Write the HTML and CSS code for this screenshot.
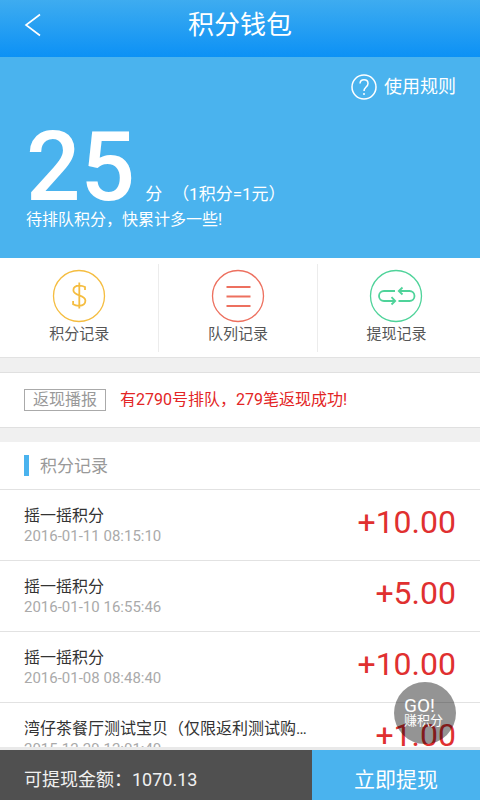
FILE: index.html
```html
<!DOCTYPE html>
<html lang="zh-CN">
<head>
<meta charset="utf-8">
<meta name="viewport" content="width=device-width, initial-scale=1">
<title>积分钱包</title>
<link rel="stylesheet" href="styles.css">
</head>
<body>
<header class="topbar">
  <a class="back" href="#" aria-label="返回">
    <svg width="18" height="24" viewBox="0 0 18 24"><path d="M16 1.500 2 12l14 10.500"/></svg>
  </a>
  <h1>积分钱包</h1>
</header>
<main>
  <section class="wallet">
    <a class="rules" href="#">
      <svg width="26" height="26" viewBox="0 0 26 26"><circle cx="13" cy="13" r="12"/><path d="M9 9.500C9.200 6.700 10.700 5.700 13 5.700c2.400 0 4 1.400 4 3.700 0 3.600-4 3.600-4 7.600M13 18.900v2.200"/></svg>
      使用规则
    </a>
    <p class="score"><strong>25</strong><span>分</span><span>（1积分=1元）</span></p>
    <p class="hint">待排队积分，快累计多一些!</p>
  </section>
  <nav class="tabs">
    <a class="gold" href="#">
      <svg width="54" height="54" viewBox="0 0 54 54"><circle cx="27" cy="27" r="25.500"/><path class="bold" d="M33 21v-3c-1.800-1-3.800-1.400-5.600-1.400-4 0-6 2-6 4.600 0 6 12 4.200 12 10.400 0 3.400-2.700 5.200-6.300 5.200-2.200 0-4.300-.5-6-1.600V32M27.300 13.500v26"/></svg>
      积分记录
    </a>
    <a class="coral" href="#">
      <svg width="54" height="54" viewBox="0 0 54 54"><circle cx="27" cy="27" r="25.500"/><path class="bold" d="M15.500 18h24M15.500 27.500h24M15.500 37h24"/></svg>
      队列记录
    </a>
    <a class="green" href="#">
      <svg width="54" height="54" viewBox="0 0 54 54"><circle cx="27" cy="27" r="25.500"/><path class="bold" d="M26 22H15a5 5 0 0 0 0 10h11M22.500 28.200l3.700 3.800-3.700 3.500M29.500 32h11a5 5 0 0 0 0-10h-11M33.500 18.500 29.800 22l3.700 3.500"/></svg>
      提现记录
    </a>
  </nav>
  <section class="news">
    <span class="tag">返现播报</span>
    <span>有2790号排队，279笔返现成功!</span>
  </section>
  <section class="records">
    <h2>积分记录</h2>
    <ul>
      <li><div class="info"><h3>摇一摇积分</h3><time>2016-01-11 08:15:10</time></div><span class="amount">+10.00</span></li>
      <li><div class="info"><h3>摇一摇积分</h3><time>2016-01-10 16:55:46</time></div><span class="amount">+5.00</span></li>
      <li><div class="info"><h3>摇一摇积分</h3><time>2016-01-08 08:48:40</time></div><span class="amount">+10.00</span></li>
      <li><div class="info"><h3>湾仔茶餐厅测试宝贝（仅限返利测试购物）</h3><time>2015-12-29 12:01:40</time></div><span class="amount">+1.00</span></li>
    </ul>
  </section>
</main>
<footer class="bottom">
  <button class="go" type="button"><b>GO!</b><span>赚积分</span></button>
  <p>可提现金额：<span>1070.13</span></p>
  <button class="withdraw" type="button">立即提现</button>
</footer>
</body>
</html>
```
FILE: styles.css
```css
* { box-sizing: border-box; }

body {
  margin: 0;
  height: 100vh;
  display: flex;
  flex-direction: column;
  overflow: hidden;
  background: #f0f0f0;
  color: #333;
  font-family: Roboto, "Noto Sans CJK SC", sans-serif;
  font-size: 16px;
  line-height: 20px;
}

h1, h2, h3, p, ul { margin: 0; padding: 0; font-weight: 400; }
ul { list-style: none; }
a { color: inherit; text-decoration: none; }
button { border: 0; padding: 0; color: #fff; font-family: inherit; }
svg { display: block; fill: none; stroke: currentColor; stroke-width: 1.3; }
.bold { stroke-width: 1.8; }

.topbar {
  flex: none;
  display: grid;
  grid-template-columns: 64px 1fr 64px;
  height: 57px;
  padding-bottom: 8px;
  align-items: center;
  background: linear-gradient(#3eacf0, #0c91f5);
  color: #fff;
}
.topbar h1 { font-size: 26px; line-height: 36px; text-align: center; }
.back { padding-left: 24px; }
.back svg { stroke-width: 1.6; }

main { flex: 1; min-height: 0; overflow: hidden; }

.wallet {
  height: 201px;
  padding: 17px 24px 0;
  background: #4ab3ee;
  color: #fff;
}
.rules {
  display: flex;
  justify-content: flex-end;
  align-items: center;
  gap: 7px;
  font-size: 18px;
  line-height: 26px;
}
.rules svg { stroke-width: 1.5; }
.score {
  display: flex;
  align-items: baseline;
  gap: 10px;
  height: 110px;
  padding: 11px 0 0 2px;
  font-size: 17px;
}
.score strong { font-size: 96px; font-weight: 500; line-height: 112px; }
.score span { line-height: 20px; }
.hint { padding-left: 2px; }

.tabs {
  display: flex;
  height: 100px;
  padding: 6px 0 5px;
  border-bottom: 1px solid #e2e2e2;
  background: #fff;
}
.tabs a {
  width: 33%;
  display: flex;
  flex-direction: column;
  align-items: center;
  gap: 1px;
  padding-top: 5px;
  color: #555;
  font-size: 15px;
}
.tabs a + a { border-left: 1px solid #ececec; }
.gold svg { color: #f5bd40; }
.coral svg { color: #ed705f; }
.green svg { color: #4fd39a; }

.news {
  display: flex;
  align-items: center;
  gap: 14px;
  height: 56px;
  margin: 14px 0;
  padding: 0 24px;
  border-top: 1px solid #e0e0e0;
  border-bottom: 1px solid #e0e0e0;
  background: #fff;
  color: #e32525;
}
.tag {
  padding: 0 8px;
  border: 1px solid #aaa;
  color: #999;
}

.records { background: #fff; }
.records h2 {
  display: flex;
  align-items: center;
  gap: 11px;
  height: 48px;
  padding: 0 24px;
  border-bottom: 1px solid #e2e2e2;
  color: #999;
  font-size: 17px;
}
.records h2::before { content: ""; width: 5px; height: 21px; background: #4ab3ee; }
.records li {
  display: flex;
  justify-content: space-between;
  height: 71px;
  padding: 16px 24px 0;
  border-bottom: 1px solid #e2e2e2;
}
.info { width: 284px; }
.info h3 {
  overflow: hidden;
  font-size: 16px;
  text-overflow: ellipsis;
  white-space: nowrap;
}
.info time { display: block; color: #aaa; font-size: 15px; }
.amount { color: #e03030; font-size: 32px; line-height: 32px; }

.bottom {
  position: relative;
  flex: none;
  display: flex;
  height: 53px;
  border-top: 3px solid #e9e9e9;
  background: #505050;
  color: #fff;
}
.bottom p { width: 65%; padding-left: 24px; font-size: 18px; line-height: 60px; color: #f0f0f0; }
.withdraw { width: 35%; background: #4ab3ee; font-size: 21px; line-height: 60px; }
.go {
  position: absolute;
  right: 24px;
  bottom: 56px;
  width: 62px;
  height: 62px;
  padding-left: 10px;
  border-radius: 50%;
  background: rgba(0, 0, 0, .42);
  text-align: left;
}
.go b, .go span { display: block; line-height: 15px; }
.go b { font-size: 19px; font-weight: 400; }
.go span { font-size: 13px; }
```
